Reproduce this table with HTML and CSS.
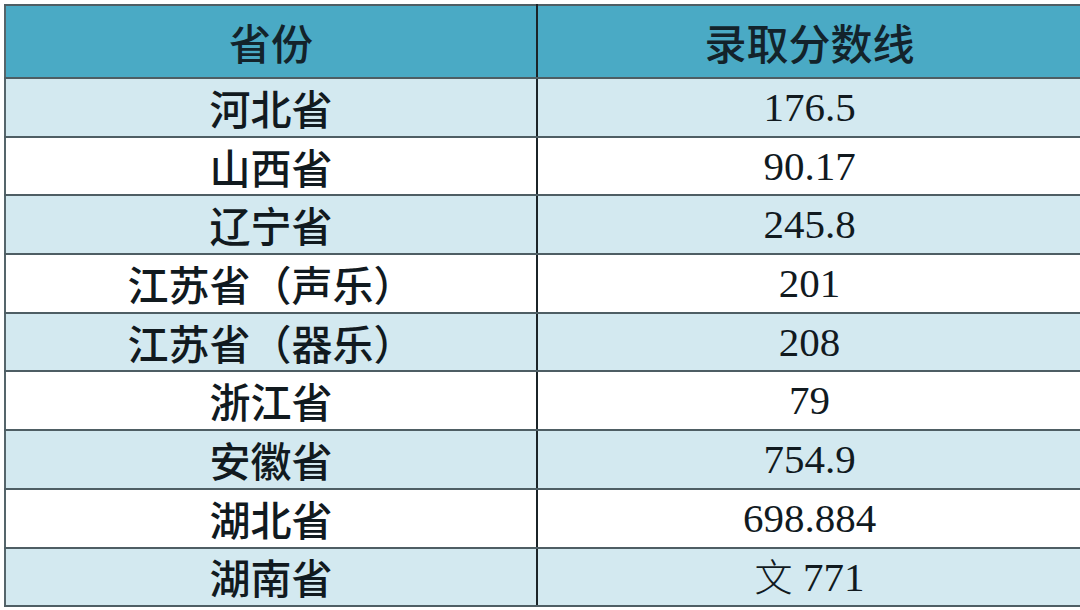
FILE: index.html
```html
<!DOCTYPE html>
<html lang="zh-CN">
<head>
<meta charset="utf-8">
<link rel="stylesheet" href="styles.css">
</head>
<body>
<table class="score-table">
  <thead>
    <tr><th class="c1">省份</th><th class="c2">录取分数线</th></tr>
  </thead>
  <tbody>
    <tr class="alt"><td class="prov">河北省</td><td class="num">176.5</td></tr>
    <tr><td class="prov">山西省</td><td class="num">90.17</td></tr>
    <tr class="alt"><td class="prov">辽宁省</td><td class="num">245.8</td></tr>
    <tr><td class="prov">江苏省（声乐）</td><td class="num">201</td></tr>
    <tr class="alt"><td class="prov">江苏省（器乐）</td><td class="num">208</td></tr>
    <tr><td class="prov">浙江省</td><td class="num">79</td></tr>
    <tr class="alt"><td class="prov">安徽省</td><td class="num">754.9</td></tr>
    <tr><td class="prov">湖北省</td><td class="num">698.884</td></tr>
    <tr class="alt"><td class="prov">湖南省</td><td class="num"><span class="wen">文</span> 771</td></tr>
  </tbody>
</table>
</body>
</html>
```
FILE: styles.css
```css
html, body {
  margin: 0;
  padding: 0;
  background: #ffffff;
}
body {
  padding: 4px 3px 0 4px;
}
.score-table {
  width: 1073px;
  border-collapse: collapse;
  table-layout: fixed;
  border: 2px solid #55656b;
}
.score-table th,
.score-table td {
  padding: 0;
  text-align: center;
  vertical-align: middle;
  border-top: 2px solid #4e5e64;
  border-bottom: 2px solid #4e5e64;
  color: #111a1f;
  line-height: 1;
}
.c1 { width: 530px; }
.c2 { width: 543px; }
.score-table th:first-child,
.score-table td:first-child {
  border-right: 2px solid #1b2428;
}
.score-table thead tr {
  height: 73px;
  background: #4aaac5;
}
.score-table th {
  font-family: "Noto Sans CJK SC", sans-serif;
  font-weight: 500;
  font-size: 42px;
  color: #13232b;
}
.score-table tbody tr {
  height: 58.7px;
  background: #ffffff;
}
.score-table tbody tr.alt {
  background: #d3e9f0;
}
.prov {
  font-family: "Noto Sans CJK SC", sans-serif;
  font-weight: 500;
  font-size: 41px;
}
.num {
  font-family: "Liberation Serif", "Noto Sans CJK SC", serif;
  font-size: 41px;
}
.wen {
  font-family: "Noto Sans CJK SC", serif;
  font-weight: 300;
  font-size: 38px;
}
```
